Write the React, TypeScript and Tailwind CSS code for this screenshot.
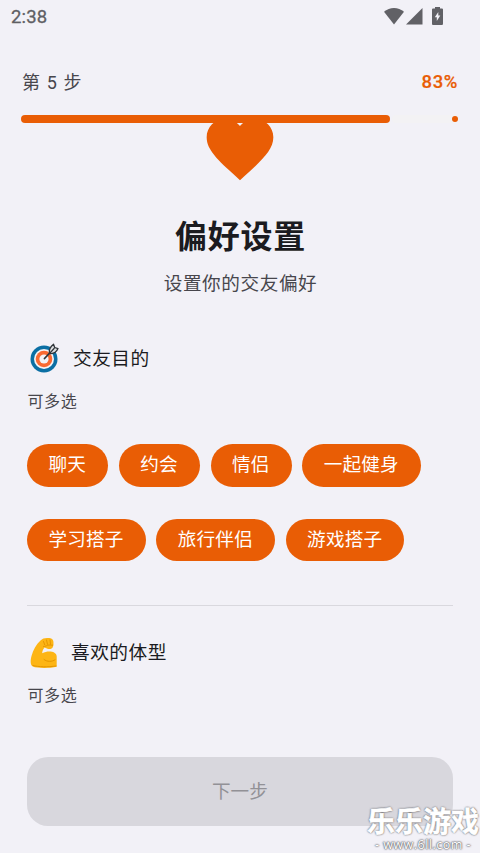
const purposes = [
  ["聊天", "约会", "情侣", "一起健身"],
  ["学习搭子", "旅行伴侣", "游戏搭子"],
];

function StatusBar() {
  return (
    <div className="flex h-8 items-center justify-between pl-[11px] pr-[36px] pt-[2px] text-[#5f5f64]">
      <span className="font-['Roboto'] text-[18.5px] font-normal leading-none tracking-[0.2px] [-webkit-text-stroke:0.3px_#5f5f64]">2:38</span>
      <div className="flex items-center pb-[2px] text-[#616166]">
        <svg width="22" height="18" viewBox="0 0 22 18" fill="currentColor">
          <path d="M11 17.500 1 4.800C6.500-.3 15.500-.3 21 4.800Z" />
        </svg>
        <svg width="18" height="18" viewBox="0 0 18 18" fill="currentColor">
          <path d="M17.500 1v16.500H1Z" />
        </svg>
        <svg className="ml-[8px]" width="13" height="20" viewBox="0 0 13 20">
          <path
            fill="currentColor"
            d="M4 1h5v1.500h2Q12 2.500 12 3.500v14Q12 19 11 19h-9Q1 19 1 18v-14.500Q1 2.500 2 2.500h2Z"
          />
          <path fill="#f2f1f7" d="M7.300 6v3.500h2L5.800 15v-3.700h-2Z" />
        </svg>
      </div>
    </div>
  );
}

function Target() {
  return (
    <svg className="-mt-[2px]" width="30" height="30" viewBox="0 0 30 30">
      <circle cx="14" cy="16" r="13.500" fill="#0b6fa4" />
      <circle cx="14" cy="16" r="10" fill="#f4f3f6" />
      <circle cx="14" cy="16" r="8.300" fill="#fa6a32" />
      <circle cx="14" cy="16" r="4.600" fill="#f4f3f6" />
      <path d="m14.500 15.500 8-8.500" stroke="#2f3438" strokeWidth="1.800" strokeLinecap="round" />
      <path
        d="M19.500 10.500C18.800 6.500 20.500 3.500 23.500 1.200l1.200 3.300 3.300 1.100c-1.500 3.500-4.500 5.500-8.500 4.900Z"
        fill="#dfe1e4"
        stroke="#2f3438"
        strokeWidth="1.300"
        strokeLinejoin="round"
      />
      <path d="m19.500 10.500 5-5.500" stroke="#2f3438" strokeWidth="1.200" />
    </svg>
  );
}

function Biceps() {
  return (
    <svg width="30" height="32" viewBox="0 0 30 32">
      <path
        fill="#fdb515"
        d="M10.500 3.500C12 1.800 14.500 1 17 1c3.500 0 5.800.5 6.300 3 .4 2.500.3 5-.8 6.800-1.200 1.500-3.500 1.500-5 .9l-3-1.200c-1.200 1.500-2.300 3.500-2.300 5.800 3-1.500 5.500-2 8.500-1.700 3.500.3 6 2.500 6 4.700v10.500C19 31.500 7 31.300 2.800 29.500 0 28 .5 22.500 1.500 19c1.800-6 4.500-11.500 9-15.500Z"
      />
      <path
        fill="none"
        stroke="#e59600"
        strokeWidth="1"
        strokeLinecap="round"
        d="M14 22.500c3 2.500 8 2.500 11 .3M3 28.500c5 1.500 15 1.700 23 .5M13.500 4.500l1.200 3.300M16.500 3l1 4.300M20 3l.5 4.300M13.500 9.500c2.300.3 3.500-1.500 5.500-1.500s2.500.3 3.700.2"
      />
    </svg>
  );
}

export default function App() {
  return (
    <div className="relative flex h-[853px] w-[480px] flex-col overflow-hidden bg-[#f2f1f7] font-['Roboto','Noto_Sans_CJK_SC',sans-serif] text-[#1b1b20]">
      <StatusBar />

      <header className="flex h-[82px] items-center justify-between pl-[22px] pr-[22px] pt-[18px] leading-none">
        <span className="pt-px text-[18px] tracking-[1.100px] text-[#47464c]">第 5 步</span>
        <span className="mt-px text-[18.500px] font-medium tracking-[0.600px] text-[#e95d05] [-webkit-text-stroke:0.2px_#e95d05]">83%</span>
      </header>

      <div className="mx-[21px] mt-[0.500px] flex h-[8.500px] shrink-0 items-center justify-between gap-[2px] pr-px">
        <div className="h-full w-[369px] rounded-full bg-[#e95d05]" />
        <div className="flex h-full flex-1 items-center justify-end rounded-full bg-[#f3f2f4] pr-[0.500px]">
          <div className="size-[5.500px] shrink-0 rounded-full bg-[#e95d05]" />
        </div>
      </div>

      <main className="flex flex-1 flex-col px-[27px]">
        <svg className="-mt-[14.300px] size-20 shrink-0 self-center" viewBox="0 0 24 24" fill="#e95d05">
          <path d="m12 21.350-1.450-1.320C5.400 15.360 2 12.280 2 8.500 2 5.420 4.420 3 7.500 3c1.740 0 3.410.81 4.500 2.090C13.090 3.810 14.760 3 16.500 3 19.580 3 22 5.420 22 8.500c0 3.780-3.400 6.860-8.550 11.540z" />
        </svg>
        <h1 className="ml-px mt-[25.600px] text-center text-[32px] font-bold leading-[46px] tracking-[0.700px]">偏好设置</h1>
        <p className="ml-px mt-[9.700px] text-center text-[18.600px] leading-[28px] tracking-[0.600px] text-[#47464c]">
          设置你的交友偏好
        </p>

        <section className="mt-[44.800px]">
          <div className="flex h-8 items-center gap-[13px] pl-[3px]">
            <Target />
            <h2 className="text-[18.700px] font-normal tracking-[0.500px]">交友目的</h2>
          </div>
          <p className="ml-[0.500px] mt-[15.500px] text-[16px] leading-6 tracking-[0.600px] text-[#47464c]">可多选</p>
          <div className="mt-[30px] flex flex-col gap-[32px]">
            {purposes.map((row) => (
              <div key={row[0]} className="flex gap-[10.700px]">
                {row.map((label) => (
                  <button
                    key={label}
                    className="h-[42.600px] rounded-full bg-[#e95d05] pl-[21.400px] pr-[22.100px] text-[18.600px] leading-none tracking-[0.200px] text-white"
                  >
                    {label}
                  </button>
                ))}
              </div>
            ))}
          </div>
        </section>

        <hr className="mt-[43.200px] border-t border-[#d9d8de]" />

        <section className="mt-[31px]">
          <div className="flex h-8 items-center gap-[11px] pl-[3px]">
            <Biceps />
            <h2 className="text-[18.700px] font-normal tracking-[0.500px]">喜欢的体型</h2>
          </div>
          <p className="ml-[0.500px] mt-[15px] text-[16px] leading-6 tracking-[0.600px] text-[#47464c]">可多选</p>
        </section>

        <button className="mb-[27px] mt-auto h-[69px] rounded-[21px] bg-[#d8d7dd] pt-[2px] text-[18.600px] tracking-[0.150px] text-[#929196]">
          下一步
        </button>
      </main>

      {/* site watermark, sits over the button corner */}
      <div className="absolute bottom-0 right-0 flex w-[114px] flex-col items-center whitespace-nowrap text-white">
        <span className="text-[28px] font-bold leading-[28px] [text-shadow:0_0_2px_#66656a,0_0_2px_#66656a,0_0_1px_#77767b] [-webkit-text-stroke:0.6px_#ffffff]">
          乐乐游戏
        </span>
        <span className="font-['Open_Sans'] text-[12.500px] leading-[16px] tracking-[0.500px] [text-shadow:0_0_2px_#66656a,0_0_2px_#66656a,0_0_1px_#66656a]">
          - www.6ll.com -
        </span>
      </div>
    </div>
  );
}
